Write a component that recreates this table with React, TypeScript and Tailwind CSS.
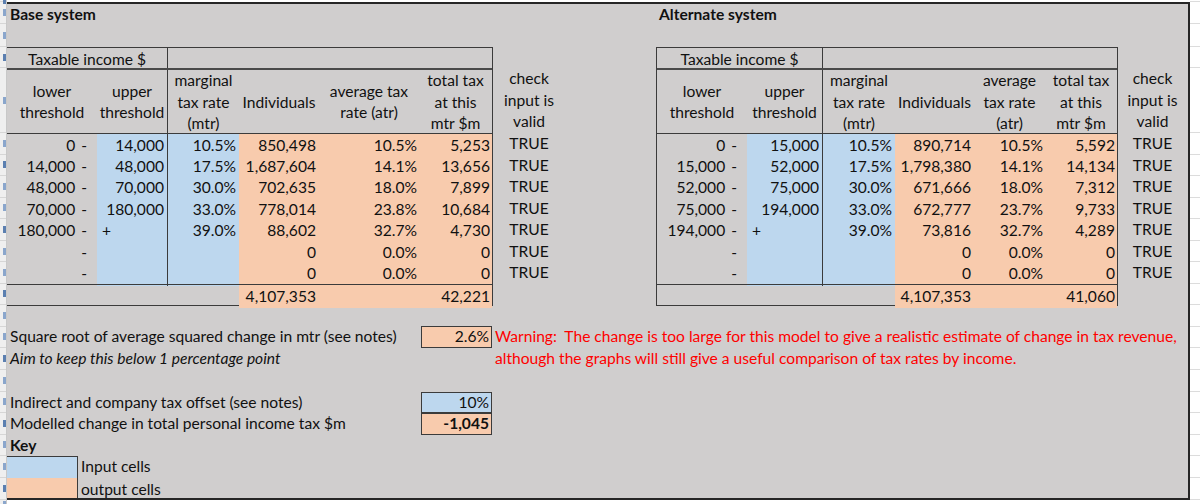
import React from "react";

type Sys = {
  title: string;
  cols: string;
  border: string;
  checkW: string;
  atrHead: string[];
  lower: string[];
  upper: string[];
  indiv: string[];
  atr: string[];
  total: string[];
  sumIndiv: string;
  sumTotal: string;
};

const mtr = ["10.5%", "17.5%", "30.0%", "33.0%", "39.0%", "", ""];

const base: Sys = {
  title: "Base system",
  cols: "grid-cols-[90px_71px_71px_80px_100px_73px]",
  border: "border-t border-r border-b",
  checkW: "w-[72px]",
  atrHead: ["average tax", "rate (atr)"],
  lower: ["0", "14,000", "48,000", "70,000", "180,000", "", ""],
  upper: ["14,000", "48,000", "70,000", "180,000", "+", "", ""],
  indiv: ["850,498", "1,687,604", "702,635", "778,014", "88,602", "0", "0"],
  atr: ["10.5%", "14.1%", "18.0%", "23.8%", "32.7%", "0.0%", "0.0%"],
  total: ["5,253", "13,656", "7,899", "10,684", "4,730", "0", "0"],
  sumIndiv: "4,107,353",
  sumTotal: "42,221",
};

const alt: Sys = {
  title: "Alternate system",
  cols: "grid-cols-[90px_76px_72px_79px_71px_72px]",
  border: "border-t border-r border-b border-l",
  checkW: "w-[69px]",
  atrHead: ["average", "tax rate", "(atr)"],
  lower: ["0", "15,000", "52,000", "75,000", "194,000", "", ""],
  upper: ["15,000", "52,000", "75,000", "194,000", "+", "", ""],
  indiv: ["890,714", "1,798,380", "671,666", "672,777", "73,816", "0", "0"],
  atr: ["10.5%", "14.1%", "18.0%", "23.7%", "32.7%", "0.0%", "0.0%"],
  total: ["5,592", "14,134", "7,312", "9,733", "4,289", "0", "0"],
  sumIndiv: "4,107,353",
  sumTotal: "41,060",
};

// sheet row heights, used for the row header strip and the gridlines on the right
const stripRows = [2, 22, 23, 21, 65, 21.57, 21.57, 21.57, 21.57, 21.57, 21.57, 21.57, 21, 22, 21, 22, 22, 21, 22, 21, 22, 22, 10];

function Head({ lines, className = "" }: { lines: string[]; className?: string }) {
  return (
    <div className={`flex flex-col items-center justify-center leading-[21.5px] ${className}`}>
      {lines.map((l) => (
        <span key={l} className="whitespace-nowrap">{l}</span>
      ))}
    </div>
  );
}

function SystemBlock({ s }: { s: Sys }) {
  return (
    <div className="flex flex-col">
      <div className="h-[20px] shrink-0 pl-[3px] font-bold leading-[20px]">{s.title}</div>
      <div className="h-[23px] shrink-0" />
      <div className="flex">
        <div className={`flex flex-col border-[#3b3b3b] ${s.border}`}>
          {/* Taxable income */}
          <div className={`grid ${s.cols} h-[20px] shrink-0`}>
            <div className="col-span-2 flex items-center justify-center border-r border-[#3b3b3b]">Taxable income $</div>
            <div className="col-span-4" />
          </div>

          {/* Headings */}
          <div className={`grid ${s.cols} h-[65px] shrink-0 border-t-2 border-[#4a4a4a]`}>
            <Head lines={["lower", "threshold"]} />
            <Head lines={["upper", "threshold"]} className="border-r border-[#3b3b3b]" />
            <Head lines={["marginal", "tax rate", "(mtr)"]} />
            <Head lines={["Individuals"]} />
            <Head lines={s.atrHead} />
            <Head lines={["total tax", "at this", "mtr $m"]} />
          </div>

          {/* Bands */}
          {s.lower.map((lo, i) => (
            <div key={i} className={`grid ${s.cols} h-[21.57px] shrink-0 ${i === 0 ? "border-t border-[#3b3b3b]" : ""}`}>
              <div className="flex items-center justify-end pr-[10px]">
                {lo}
                <span className="ml-[6px]">-</span>
              </div>
              {s.upper[i] === "+" ? (
                <div className="flex items-center justify-start pl-[5px] bg-[#bdd7ee] border-r border-[#3b3b3b]">+</div>
              ) : (
                <div className="flex items-center justify-end pr-[3px] bg-[#bdd7ee] border-r border-[#3b3b3b]">{s.upper[i]}</div>
              )}
              <div className="flex items-center justify-end pr-[3px] bg-[#bdd7ee]">{mtr[i]}</div>
              <div className="flex items-center justify-end pr-[3px] bg-[#f8cbad]">{s.indiv[i]}</div>
              <div className="flex items-center justify-end pr-[2px] bg-[#f8cbad]">{s.atr[i]}</div>
              <div className="flex items-center justify-end pr-[2px] bg-[#f8cbad]">{s.total[i]}</div>
            </div>
          ))}

          {/* Totals */}
          <div className={`grid ${s.cols} h-[21px] shrink-0 border-t border-[#3b3b3b]`}>
            <div className="col-span-3" />
            <div className="flex items-center justify-end pr-[3px] bg-[#f8cbad]">{s.sumIndiv}</div>
            <div className="bg-[#f8cbad]" />
            <div className="flex items-center justify-end pr-[2px] bg-[#f8cbad]">{s.sumTotal}</div>
          </div>
        </div>

        {/* check column */}
        <div className={`flex flex-col ${s.checkW}`}>
          <div className="h-[21px] shrink-0" />
          <Head lines={["check", "input is", "valid"]} className="h-[65px] shrink-0" />
          {s.lower.map((_, i) => (
            <div key={i} className="h-[21.57px] shrink-0 flex items-center justify-center">TRUE</div>
          ))}
        </div>
      </div>
    </div>
  );
}

function LabelRow({ label, value, tone, bold = false, h }: { label: string; value: string; tone: string; bold?: boolean; h: string }) {
  return (
    <div className={`flex shrink-0 items-stretch ${h}`}>
      <div className="w-[414px] pl-[3px] flex items-center whitespace-nowrap">{label}</div>
      <div className={`w-[71px] border border-[#3b3b3b] flex items-center justify-end pr-[2px] ${tone} ${bold ? "font-bold" : ""}`}>{value}</div>
    </div>
  );
}

export default function App() {
  return (
    <div className="w-[1200px] h-[504px] overflow-hidden bg-white flex font-['Lato',sans-serif] text-[15.6px] text-[#111]">
      {/* row header strip */}
      <div className="w-[7px] shrink-0 flex flex-col bg-[#efefef] border-r border-[#c8c8c8] overflow-hidden">
        {stripRows.map((h, i) => (
          <div key={i} style={{ height: h }} className="shrink-0 flex items-center justify-end border-b border-[#d6d6d6]">
            <div className={`w-[3px] h-[7px] ${i % 3 === 0 ? "bg-[#5b7fb0]" : "bg-[#8aa6cc]"}`} />
          </div>
        ))}
      </div>

      {/* sheet area */}
      <div className="mt-[2px] h-[498px] w-[1183px] shrink-0 overflow-hidden bg-[#d0cece] border-t-2 border-r-2 border-b-2 border-[#262626] flex flex-col">
        <div className="flex shrink-0">
          <SystemBlock s={base} />
          <div className="w-[91px] shrink-0" />
          <SystemBlock s={alt} />
        </div>

        <div className="h-[20px] shrink-0" />
        <div className="flex h-[22px] shrink-0">
          <LabelRow label="Square root of average squared change in mtr (see notes)" value="2.6%" tone="bg-[#f8cbad]" h="h-[22px]" />
          <div className="pl-[3px] flex items-center whitespace-nowrap text-[#ff0000]">
            Warning:&nbsp; The change is too large for this model to give a realistic estimate of change in tax revenue,
          </div>
        </div>
        <div className="flex h-[22px] shrink-0">
          <div className="w-[414px] pl-[3px] flex items-center italic">Aim to keep this below 1 percentage point</div>
          <div className="w-[71px]" />
          <div className="pl-[3px] flex items-center whitespace-nowrap text-[#ff0000]">
            although the graphs will still give a useful comparison of tax rates by income.
          </div>
        </div>
        <div className="h-[22px] shrink-0" />
        <LabelRow label="Indirect and company tax offset (see notes)" value="10%" tone="bg-[#bdd7ee]" h="h-[21px]" />
        <LabelRow label="Modelled change in total personal income tax $m" value="-1,045" tone="bg-[#f8cbad]" bold h="h-[22px]" />
        <div className="h-[21px] shrink-0 pl-[3px] flex items-center font-bold">Key</div>
        <div className="flex h-[22px] shrink-0">
          <div className="w-[71px] bg-[#bdd7ee] border-t border-r border-[#3b3b3b]" />
          <div className="pl-[3px] flex items-center">Input cells</div>
        </div>
        <div className="flex flex-1">
          <div className="w-[71px] bg-[#f8cbad] border-r border-[#3b3b3b]" />
          <div className="pl-[3px] flex items-center">output cells</div>
        </div>
      </div>

      {/* cells beyond the panel */}
      <div className="flex-1 flex flex-col overflow-hidden">
        {stripRows.map((h, i) => (
          <div key={i} style={{ height: h }} className="shrink-0 border-b border-[#dcdcdc]" />
        ))}
      </div>
    </div>
  );
}
